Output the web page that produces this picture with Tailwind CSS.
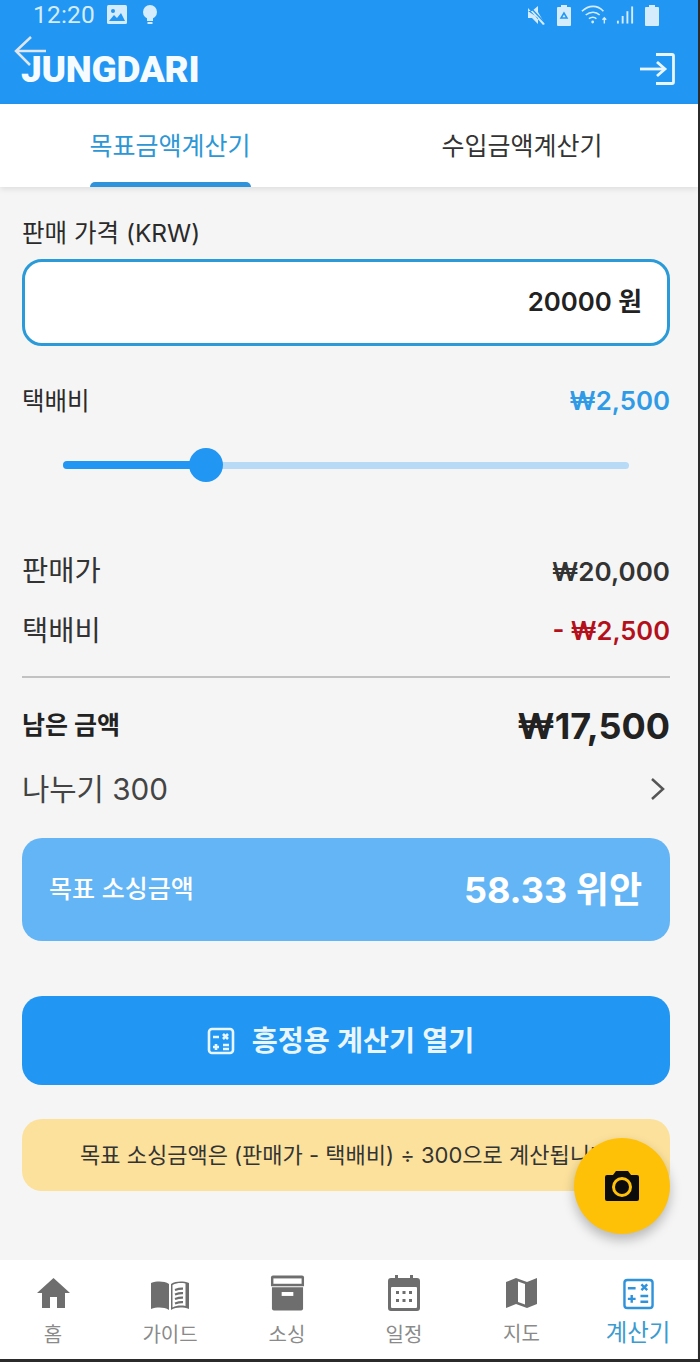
<!DOCTYPE html>
<html lang="ko">
<head>
<meta charset="utf-8">
<script src="https://cdn.jsdelivr.net/npm/@tailwindcss/browser@4"></script>
</head>
<body class="m-0 bg-[#2b2b2b]">
<div class="relative w-[698px] h-[1359px] overflow-hidden flex flex-col bg-[#f5f5f5] text-[#222] font-['Inter','Noto_Sans_CJK_KR',sans-serif]">
  <!-- header -->
  <header class="relative h-[104px] shrink-0 bg-[#2196f3] flex flex-col">
    <div class="h-[30px] flex items-center justify-between pl-[33px] pr-[38px] text-[#d5ecfd]">
      <div class="flex items-center gap-[11px]">
        <span class="font-['Roboto',sans-serif] text-[24.500px] leading-[30px] tracking-[0.2px]">12:20</span>
        <svg width="22" height="20" viewBox="0 0 22 20"><rect x="1" y="0" width="20" height="19" rx="1.500" fill="#d5ecfd"/><path d="M3 16l5-6 3 3 4-5 4 8z" fill="#2196f3"/><circle cx="7" cy="6" r="2" fill="#2196f3"/></svg>
        <svg class="ml-[3px]" width="16" height="22" viewBox="0 0 16 22"><circle cx="8" cy="8" r="7" fill="#d5ecfd"/><rect x="5" y="14" width="6" height="3" fill="#d5ecfd"/><rect x="5.500" y="18" width="5" height="2" fill="#d5ecfd"/></svg>
      </div>
      <div class="flex items-center gap-[9px]">
        <svg width="20" height="20" viewBox="0 0 20 20"><path d="M1 6h4l6-5v6l7 12-2 1L1 3z M1 6v7h4l6 6v-6z" fill="#d5ecfd"/><path d="M2 1l17 18" stroke="#2196f3" stroke-width="1.200"/></svg>
        <svg width="16" height="22" viewBox="0 0 16 22"><path d="M5 1h6v2h3a1 1 0 0 1 1 1v17a1 1 0 0 1-1 1H2a1 1 0 0 1-1-1V4a1 1 0 0 1 1-1h3z" fill="#d5ecfd"/><path d="M8 9l-3 5h6z" fill="none" stroke="#2196f3" stroke-width="1.500"/></svg>
        <svg width="28" height="22" viewBox="0 0 30 22" fill="none" stroke="#d5ecfd" stroke-width="1.700"><path d="M1 7c7-7 17-7 23 0"/><path d="M5 11c5-4 11-4 15 0"/><path d="M8.500 15c2.500-2 6-2 8 0"/><circle cx="12.500" cy="18.500" r="1.500" fill="#d5ecfd" stroke="none"/><path d="M25 20v-6m-2 2l2-2 2 2" stroke-width="1.500"/></svg>
        <svg class="-ml-[2px]" width="19" height="20" viewBox="0 0 20 20" fill="#d5ecfd"><rect x="1" y="16" width="2" height="3"/><rect x="6" y="11" width="2" height="8"/><rect x="11" y="6" width="2" height="13"/><rect x="16" y="1" width="2" height="18"/></svg>
        <svg width="16" height="22" viewBox="0 0 16 22"><path d="M5 1h6v2h3a1 1 0 0 1 1 1v17a1 1 0 0 1-1 1H2a1 1 0 0 1-1-1V4a1 1 0 0 1 1-1h3z" fill="#d5ecfd"/></svg>
      </div>
    </div>
    <div class="relative flex-1 flex items-center justify-between pl-[21px] pr-[23px]">
      <span class="mt-[6px] font-['Roboto',sans-serif] font-black text-[37px] leading-[34px] tracking-[-0.300px] text-[#f6fbff]">JUNGDARI</span>
      <svg class="absolute left-[13px] top-[4px]" width="34" height="34" viewBox="0 0 34 34" fill="none" stroke="#dfe6ee" stroke-width="2.500"><path d="M33 17H3"/><path d="M18 3L3 17l14 14"/></svg>
      <svg class="mt-[4px]" width="36" height="32" viewBox="0 0 36 32" fill="none" stroke="#eaf6ff" stroke-width="2.800"><path d="M1 16h25"/><path d="M18 9l8 7-8 7"/><path d="M17 1.500h16a1.500 1.500 0 0 1 1.500 1.500v26a1.500 1.500 0 0 1-1.500 1.500H17"/></svg>
    </div>
  </header>
  <!-- tabs -->
  <nav class="h-[83px] shrink-0 bg-white flex shadow-[0_2px_6px_rgba(0,0,0,0.10)] relative z-10">
    <div class="w-[342px] relative flex justify-center pt-[24px] text-[#2d97d6] text-[25px] leading-[36px]">
      <span class="-ml-[2px]">목표금액계산기</span>
      <div class="absolute left-[90px] bottom-0 w-[161px] h-[5px] rounded-t-[5px] bg-[#2f93dc]"></div>
    </div>
    <div class="flex-1 flex justify-center pt-[24px] pl-[4px] text-[#333] text-[25px] leading-[36px]">수입금액계산기</div>
  </nav>
  <!-- content -->
  <main class="flex-1 px-[22px] pr-[28px] flex flex-col">
    <label class="mt-[28px] text-[24.500px] leading-[37px] text-[#2a2a2a]">판매 가격 (KRW)</label>
    <div class="mt-[7px] h-[87px] rounded-[20px] border-[3px] border-[#2a9ad8] bg-white flex items-center justify-end pr-[25px] text-[25.800px] font-semibold text-[#222]">20000 원</div>
    <div class="mt-[37px] flex justify-between items-center h-[36px]">
      <span class="text-[24.500px] text-[#2a2a2a]">택배비</span>
      <span class="text-[25.800px] font-semibold text-[#2f9be6]">₩2,500</span>
    </div>
    <!-- slider -->
    <div class="relative h-[40px] mt-[26px] mx-[41px] flex items-center">
      <div class="w-full h-[7px] rounded-full bg-[#b7dbf7]"></div>
      <div class="absolute left-0 w-[143px] h-[8px] rounded-l-full bg-[#2196f3]"></div>
      <div class="absolute left-[126px] top-[3px] w-[34px] h-[34px] rounded-full bg-[#2196f3]"></div>
    </div>
    <div class="mt-[68px] flex justify-between items-center h-[36px]">
      <span class="text-[28.500px] text-[#333]">판매가</span>
      <span class="text-[26px] font-semibold text-[#333]">₩20,000</span>
    </div>
    <div class="mt-[24px] flex justify-between items-center h-[36px]">
      <span class="text-[28.500px] text-[#333]">택배비</span>
      <span class="text-[25.500px] font-semibold text-[#b3101c]">- ₩2,500</span>
    </div>
    <hr class="mt-[27px] border-0 h-[2px] bg-[#c2c2c2]">
    <div class="mt-[26px] flex justify-between items-center h-[44px]">
      <span class="text-[25px] font-bold text-[#222]">남은 금액</span>
      <span class="text-[36px] font-bold text-[#222]">₩17,500</span>
    </div>
    <div class="mt-[23px] flex justify-between items-center h-[36px]">
      <span class="text-[29.700px] text-[#444]">나누기 300</span>
      <svg class="mr-[3px]" width="18" height="26" viewBox="0 0 18 26" fill="none" stroke="#555" stroke-width="2.500"><path d="M3 3l11 10L3 23"/></svg>
    </div>
    <div class="mt-[31px] h-[103px] rounded-[20px] bg-[#64b5f6] flex items-center justify-between pl-[27px] pr-[28px] text-white">
      <span class="text-[25px] font-medium">목표 소싱금액</span>
      <span class="text-[36px] font-bold">58.33 위안</span>
    </div>
    <div class="mt-[55px] h-[89px] rounded-[20px] bg-[#2196f3] flex items-center justify-center gap-[17px] pr-[11px] pt-[1px] text-[#eaf6ff]">
      <svg width="28" height="28" viewBox="0 0 28 28" fill="none" stroke="currentColor" stroke-width="2.600"><rect x="2" y="2" width="24" height="24" rx="3"/><path d="M6 10h6M16 7l5 5M21 7l-5 5M6 20h6M9 17v6M16 18h6M16 22h6"/></svg>
      <span class="text-[28.300px] font-semibold">흥정용 계산기 열기</span>
    </div>
    <div class="mt-[34px] h-[72px] rounded-[20px] bg-[#fbe19c] flex items-center pl-[58px] text-[22px] text-[#333] whitespace-nowrap overflow-hidden">목표 소싱금액은 (판매가 - 택배비) ÷ 300으로 계산됩니다.</div>
  </main>
  <!-- FAB -->
  <div class="absolute left-[574px] top-[1138px] w-[96px] h-[96px] rounded-full bg-[#ffc107] shadow-[0_6px_12px_rgba(0,0,0,0.25)] flex items-center justify-center">
    <svg width="36" height="32" viewBox="0 0 36 32"><path d="M12 1h12l3 4h6a2 2 0 0 1 2 2v22a2 2 0 0 1-2 2H3a2 2 0 0 1-2-2V7a2 2 0 0 1 2-2h6z" fill="#0c0c0c"/><circle cx="18" cy="17" r="8.500" fill="#0c0c0c" stroke="#ffc107" stroke-width="3"/></svg>
  </div>
  <!-- bottom nav -->
  <footer class="h-[99px] w-[702px] -ml-[5.500px] shrink-0 bg-white grid grid-cols-6 text-[#8a8a8a] text-[20px] leading-[30px]">
    <div class="flex flex-col items-center pt-[15px]">
      <svg class="h-[36px]" width="33" height="30" viewBox="0 0 33 30" fill="#6e6e6e"><path d="M16.500 0L0 15h5v15h8V19h7v11h8V15h5z"/></svg>
      <span class="mt-[9px]">홈</span>
    </div>
    <div class="flex flex-col items-center pt-[17px]">
      <svg class="h-[36px]" width="38" height="30" viewBox="0 0 38 30"><path d="M0 3c6-2 13-2 18 1v26c-5-3-12-3-18-1z" fill="#6e6e6e"/><path d="M20 4c5-3 12-3 18-1v26c-6-2-13-2-18 1z" fill="#6e6e6e"/><path d="M21.500 5c4-2 8-2.500 13-1.500v22.500c-5-1-9-.5-13 1.500z" fill="#fff"/><path d="M24 10c3-1 5-1.500 8-1.300M24 14.500c3-1 5-1.500 8-1.300M24 19c3-1 5-1.500 8-1.300M24 23.500c3-1 5-1.500 8-1.300" stroke="#6e6e6e" stroke-width="2.200" fill="none"/></svg>
      <span class="mt-[7px]">가이드</span>
    </div>
    <div class="flex flex-col items-center pt-[15px]">
      <svg class="h-[36px]" width="35" height="36" viewBox="0 0 36 36" fill="#6e6e6e"><path d="M3 0h30a2 2 0 0 1 2 2v9H1V2a2 2 0 0 1 2-2z"/><rect x="3.500" y="3" width="29" height="5.500" fill="#fff"/><path d="M2 12h32v22a2 2 0 0 1-2 2H4a2 2 0 0 1-2-2z"/><rect x="12" y="17" width="12" height="4" fill="#fff"/></svg>
      <span class="mt-[9px]">소싱</span>
    </div>
    <div class="flex flex-col items-center pt-[15px]">
      <svg class="h-[36px]" width="32" height="36" viewBox="0 0 32 36" fill="#6e6e6e"><path d="M3 3h4V0h3v3h12V0h3v3h4a3 3 0 0 1 3 3v27a3 3 0 0 1-3 3H3a3 3 0 0 1-3-3V6a3 3 0 0 1 3-3z"/><rect x="3" y="12" width="26" height="21" rx="1" fill="#fff"/><g fill="#6e6e6e"><rect x="8" y="16" width="3" height="3"/><rect x="14.500" y="16" width="3" height="3"/><rect x="21" y="16" width="3" height="3"/><rect x="8" y="24" width="3" height="3"/><rect x="14.500" y="24" width="3" height="3"/><rect x="21" y="24" width="3" height="3"/></g></svg>
      <span class="mt-[9px]">일정</span>
    </div>
    <div class="flex flex-col items-center pt-[15px] pl-[1px]">
      <svg class="h-[36px]" width="32" height="32" viewBox="0 0 32 32" fill="#6e6e6e"><path d="M0 5l10-4 11 4 10-4v26l-10 4-11-4-10 4z"/><path d="M12 4.500l7 2.500v20.500l-7-2.500z" fill="#fff"/></svg>
      <span class="mt-[8px]">지도</span>
    </div>
    <div class="flex flex-col items-center pt-[16px] text-[#3c9bcf] text-[23.400px]">
      <svg class="h-[36px]" width="31" height="31" viewBox="0 0 32 32" fill="none" stroke="#2f93dc" stroke-width="2.500"><rect x="1.500" y="1.500" width="29" height="29" rx="3"/><path d="M5 10h8M19 6l6 6M25 6l-6 6M5 21h8M9 17v8M18 18h8M18 24h8"/></svg>
      <span class="mt-[6px]">계산기</span>
    </div>
  </footer>
</div>
</body>
</html>
